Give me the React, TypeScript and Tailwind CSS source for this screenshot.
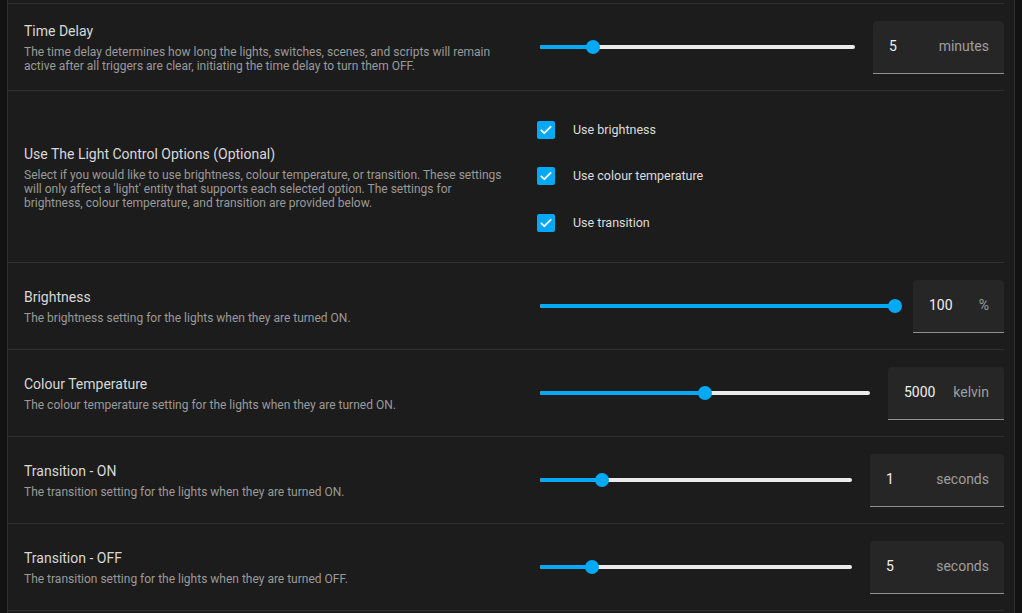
import React from "react";

type SliderRow = {
    title: string;
    desc: string[];
    value: string;
    unit: string;
    pct: number;
    inputW: string;
};

function Slider({ pct }: { pct: number }) {
    return (
        <div className="relative flex-1 h-[14px] flex items-center">
            <div className="w-full h-[4px] rounded-full bg-[#ececec]" />
            <div
                className="absolute left-0 h-[4px] rounded-l-full bg-[#03a9f4]"
                style={{ width: `${pct * 100}%` }}
            />
            <div
                className="absolute w-[14px] h-[14px] -ml-[7px] rounded-full bg-[#03a9f4]"
                style={{ left: `${pct * 100}%` }}
            />
        </div>
    );
}

function NumberBox({ value, unit, width }: { value: string; unit: string; width: string }) {
    return (
        <div
            className={`${width} h-[53px] shrink-0 flex items-center justify-between pl-4 pr-[15px] bg-[#262626] rounded-t border-b border-[#8f8f8f]`}
        >
            <span className="text-[14px] text-[#f0f0f0]">{value}</span>
            <span className="text-[14px] text-[#9e9e9e]">{unit}</span>
        </div>
    );
}

function RowText({ title, desc }: { title: string; desc: string[] }) {
    return (
        <div className="flex-1 pl-4 pr-4">
            <div className="text-[14px] leading-[20px] text-[#d8d8d8]">{title}</div>
            <div className="mt-[4px]">
                {desc.map((d) => (
                    <div key={d} className="text-[12px] leading-[14px] text-[#9a9a9a]">
                        {d}
                    </div>
                ))}
            </div>
        </div>
    );
}

function SettingRow({ row }: { row: SliderRow }) {
    return (
        <div className="flex items-center h-[87px] border-t border-[#2f2f2f]">
            <RowText title={row.title} desc={row.desc} />
            <div className="w-[472px] flex items-center gap-[18px] pl-2">
                <Slider pct={row.pct} />
                <NumberBox value={row.value} unit={row.unit} width={row.inputW} />
            </div>
        </div>
    );
}

function CheckIcon() {
    return (
        <div className="w-[18px] h-[18px] rounded-[2px] bg-[#03a9f4] flex items-center justify-center">
            <svg width="14" height="14" viewBox="0 0 24 24" fill="none">
                <path d="M4 12.5l5 5L20 6.5" stroke="white" strokeWidth="3" strokeLinecap="round" strokeLinejoin="round" />
            </svg>
        </div>
    );
}

const lightRows: SliderRow[] = [
    {
        title: "Brightness",
        desc: ["The brightness setting for the lights when they are turned ON."],
        value: "100",
        unit: "%",
        pct: 1,
        inputW: "w-[91px]",
    },
    {
        title: "Colour Temperature",
        desc: ["The colour temperature setting for the lights when they are turned ON."],
        value: "5000",
        unit: "kelvin",
        pct: 0.5,
        inputW: "w-[116px]",
    },
    {
        title: "Transition - ON",
        desc: ["The transition setting for the lights when they are turned ON."],
        value: "1",
        unit: "seconds",
        pct: 0.2,
        inputW: "w-[134px]",
    },
    {
        title: "Transition - OFF",
        desc: ["The transition setting for the lights when they are turned OFF."],
        value: "5",
        unit: "seconds",
        pct: 0.167,
        inputW: "w-[134px]",
    },
];

export default function App() {
    const options = ["Use brightness", "Use colour temperature", "Use transition"];

    return (
        <div
            className="h-[613px] w-full overflow-hidden bg-[#121212] px-[7px]"
            style={{ fontFamily: "Roboto, 'Noto Sans', sans-serif" }}
        >
            <div className="h-full bg-[#1c1c1c] border-x border-[#2f2f2f] pt-[3px] pr-[10px]">
                {/* Time delay */}
                <SettingRow
                    row={{
                        title: "Time Delay",
                        desc: [
                            "The time delay determines how long the lights, switches, scenes, and scripts will remain",
                            "active after all triggers are clear, initiating the time delay to turn them OFF.",
                        ],
                        value: "5",
                        unit: "minutes",
                        pct: 0.168,
                        inputW: "w-[131px]",
                    }}
                />

                {/* Light control options */}
                <div className="flex items-center h-[172px] border-t border-[#2f2f2f]">
                    <RowText
                        title="Use The Light Control Options (Optional)"
                        desc={[
                            "Select if you would like to use brightness, colour temperature, or transition. These settings",
                            "will only affect a 'light' entity that supports each selected option. The settings for",
                            "brightness, colour temperature, and transition are provided below.",
                        ]}
                    />
                    <div className="w-[472px] flex flex-col gap-[27px] pl-[5px] pb-[1px]">
                        {options.map((o) => (
                            <div key={o} className="flex items-center gap-[18px]">
                                <CheckIcon />
                                <span className="text-[12.5px] leading-[19.5px] text-[#dcdcdc]">{o}</span>
                            </div>
                        ))}
                    </div>
                </div>

                {lightRows.map((r) => (
                    <SettingRow key={r.title} row={r} />
                ))}
                <div className="border-t border-[#2f2f2f]" />
            </div>
        </div>
    );
}
